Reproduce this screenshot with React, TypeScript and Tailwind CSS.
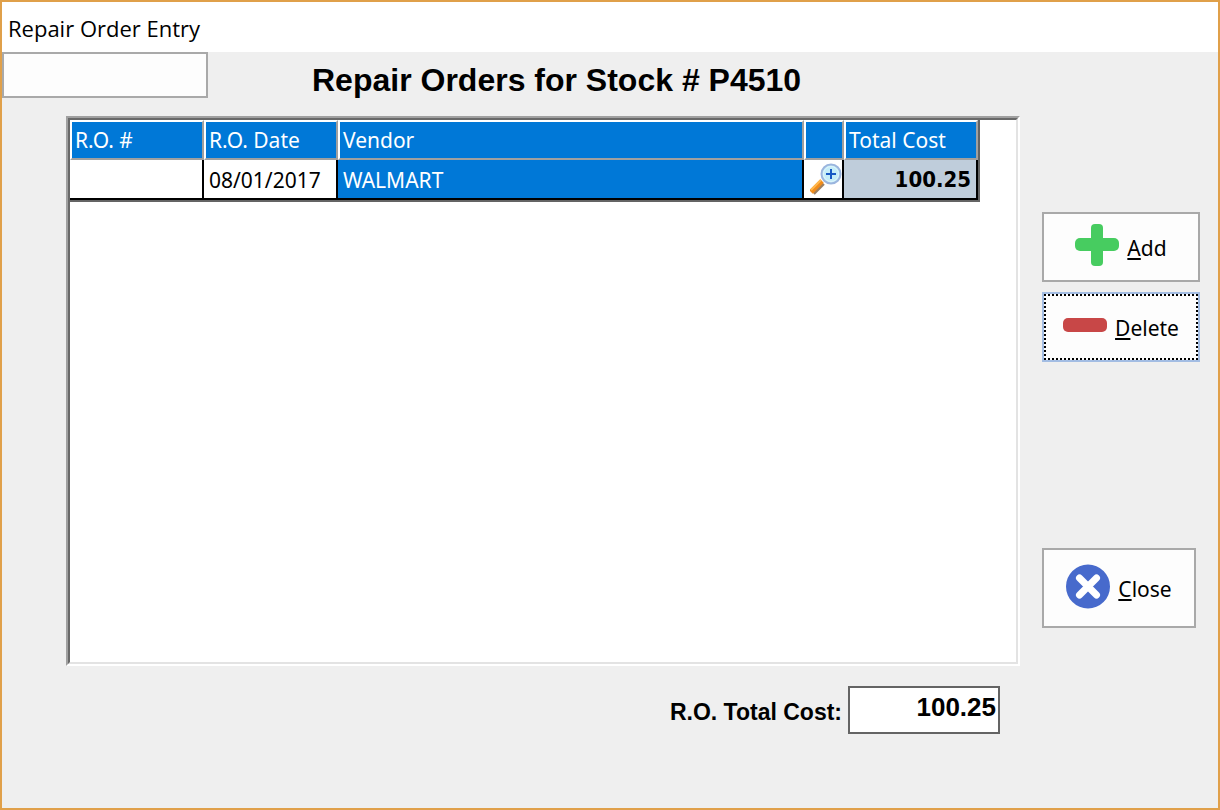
import React from 'react';

const orders = [{ number: '', date: '08/01/2017', vendor: 'WALMART', total: '100.25' }];

const headCell =
  'h-10 border-t-2 border-l-2 border-t-white border-l-white border-r-2 border-r-[#a0a0a0] border-b-2 border-b-[#a0a0a0] bg-[#0078d7] p-0 px-[3px] text-left font-normal text-white';
const bodyCell = 'h-10 border-r-2 border-b-2 border-black p-0 px-[5px] pt-0.5';

function PlusIcon() {
  return (
    <svg width="44" height="48" viewBox="0 0 44 48" aria-hidden="true">
      <rect x="16" y="1" width="12" height="42" rx="4" fill="#47cc60" />
      <rect x="0" y="15" width="44" height="13" rx="5" fill="#47cc60" />
    </svg>
  );
}

function MinusIcon() {
  return (
    <svg width="44" height="48" viewBox="0 0 44 48" aria-hidden="true">
      <rect x="0" y="15" width="44" height="14" rx="5" fill="#c84747" />
    </svg>
  );
}

function CloseIcon() {
  return (
    <svg width="44" height="48" viewBox="0 0 44 48" aria-hidden="true">
      <circle cx="22" cy="22.5" r="22" fill="#476acc" />
      <path d="M13.5 14l17 17M30.5 14l-17 17" stroke="#fff" strokeWidth="7" strokeLinecap="round" />
    </svg>
  );
}

function LookupIcon() {
  return (
    <svg width="32" height="32" viewBox="0 0 32 32" aria-hidden="true">
      <path d="M3 30L13 20" stroke="#9c7f60" strokeWidth="5" />
      <path d="M1 29L12 18" stroke="#f08c1c" strokeWidth="5" />
      <path d="M1 27L11 17" stroke="#ffb84d" strokeWidth="2" />
      <circle cx="21" cy="11" r="9.5" fill="#c5edf8" stroke="#9bb5de" strokeWidth="2" />
      <circle cx="21" cy="11" r="7.5" fill="none" stroke="#def5fb" strokeWidth="1" />
      <path d="M21 6v10M16 11h10" stroke="#1759c4" strokeWidth="2" />
    </svg>
  );
}

function Label({ text }: { text: string }) {
  return (
    <span className="pt-0.5">
      <span className="underline decoration-2 underline-offset-2">{text[0]}</span>
      {text.slice(1)}
    </span>
  );
}

export default function App() {
  return (
    <div className="flex min-h-screen flex-col border-2 border-[#e0a04a] bg-[#efefef] font-['Noto_Sans',sans-serif] text-[21px] leading-7 text-black">
      <header className="flex h-[50px] items-center bg-white px-1.5 pt-0.5 font-['Open_Sans',sans-serif] text-[22px]">
        Repair Order Entry
      </header>

      <div className="flex h-16 items-start">
        <input
          type="text"
          aria-label="Search"
          className="h-[46px] w-[206px] border-2 border-[#a9a9a9] bg-[#fdfdfd] px-1 outline-none"
        />
        <h1 className="ml-[104px] pt-2 font-['Liberation_Sans',sans-serif] text-[32px] leading-10 font-bold">
          Repair Orders for Stock # P4510
        </h1>
      </div>

      <main className="flex grow gap-[22px] pr-[18px] pl-16">
        <div className="flex grow flex-col pb-[74px]">
          <div className="grow border-2 border-t-[#a0a0a0] border-r-white border-b-white border-l-[#a0a0a0]">
            <div className="h-full border-2 border-t-[#696969] border-r-[#e3e3e3] border-b-[#e3e3e3] border-l-[#696969] bg-white pr-9">
              <div className="border-r-2 border-b-2 border-[#646464]">
                <table className="w-full table-fixed border-separate border-spacing-0">
                  <colgroup>
                    <col className="w-[134px]" />
                    <col className="w-[134px]" />
                    <col />
                    <col className="w-10" />
                    <col className="w-[134px]" />
                  </colgroup>
                  <thead>
                    <tr>
                      <th className={headCell}>R.O. #</th>
                      <th className={headCell}>R.O. Date</th>
                      <th className={headCell}>Vendor</th>
                      <th className={headCell}></th>
                      <th className={headCell}>Total Cost</th>
                    </tr>
                  </thead>
                  <tbody>
                    {orders.map((order) => (
                      <tr key={order.date}>
                        <td className={bodyCell}>{order.number}</td>
                        <td className={bodyCell}>{order.date}</td>
                        <td className={`${bodyCell} bg-[#0078d7] text-white`}>{order.vendor}</td>
                        <td className="h-10 border-r-2 border-b-2 border-black p-0">
                          <button type="button" aria-label="Look up vendor" className="ml-auto block">
                            <LookupIcon />
                          </button>
                        </td>
                        <td
                          className={`${bodyCell} bg-[#bfcddb] text-right font-['DejaVu_Sans_Condensed','DejaVu_Sans',sans-serif] text-[22px] font-bold`}
                        >
                          {order.total}
                        </td>
                      </tr>
                    ))}
                  </tbody>
                </table>
              </div>
            </div>
          </div>

          <div className="mt-5 mr-5 flex items-center justify-end gap-1.5 font-['Liberation_Sans',sans-serif] font-bold">
            <label htmlFor="total" className="pt-1 text-[23px]">
              R.O. Total Cost:
            </label>
            <input
              id="total"
              type="text"
              readOnly
              value="100.25"
              className="h-12 w-[152px] border-2 border-[#646464] bg-white pr-0.5 pb-1.5 text-right text-[26px] outline-none"
            />
          </div>
        </div>

        <aside className="flex w-[158px] shrink-0 flex-col gap-2.5 pt-24">
          <button
            type="button"
            className="flex h-[70px] items-center justify-center gap-2 border-2 border-[#a9a9a9] bg-[#fdfdfd]"
          >
            <PlusIcon />
            <Label text="Add" />
          </button>
          <button type="button" className="h-[70px] border-2 border-[#a3bde3] bg-[#fdfdfd]">
            <span className="flex h-full items-center justify-center gap-2 border-2 border-dotted border-black">
              <MinusIcon />
              <Label text="Delete" />
            </span>
          </button>
          <button
            type="button"
            className="mt-44 mr-1 flex h-20 items-center justify-center gap-2 border-2 border-[#a9a9a9] bg-[#fdfdfd]"
          >
            <CloseIcon />
            <Label text="Close" />
          </button>
        </aside>
      </main>
    </div>
  );
}
